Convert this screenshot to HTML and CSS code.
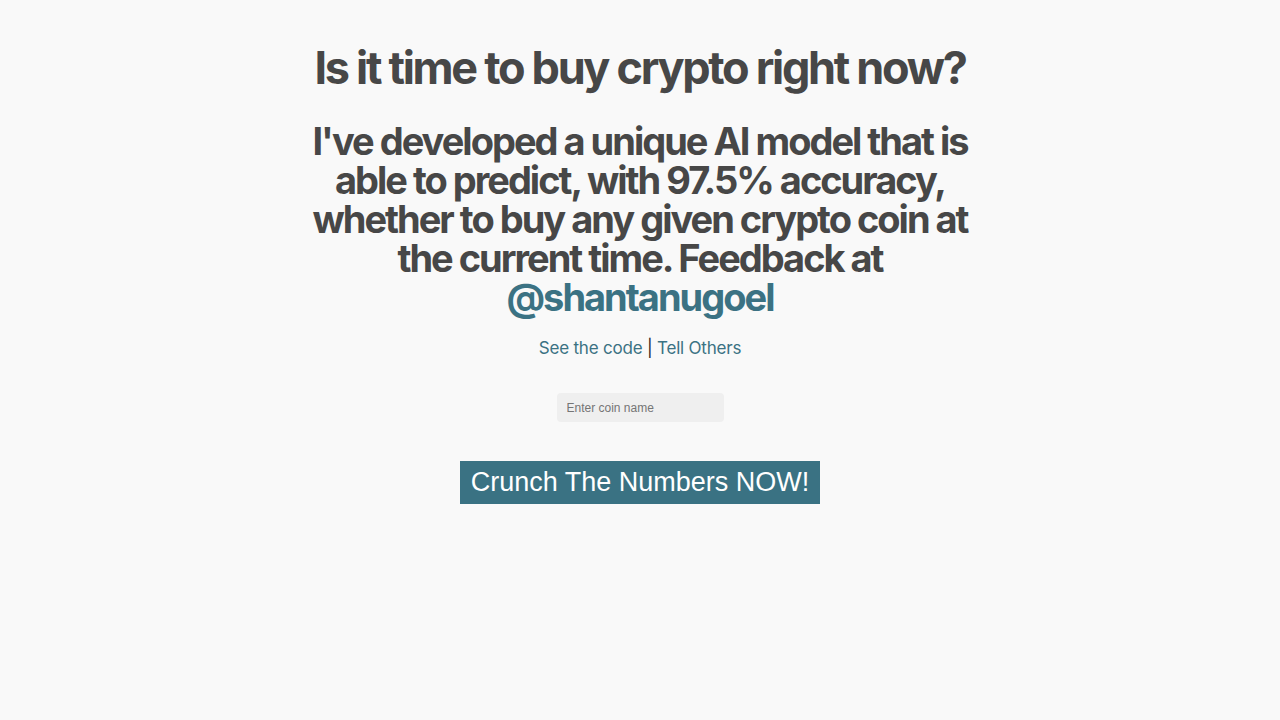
FILE: index.html
```html
<!DOCTYPE html>
<html>
<head>
<meta charset="utf-8">
<link rel="stylesheet" href="styles.css">
</head>
<body>
<main class="page">
  <h1 class="title">Is it time to buy crypto right now?</h1>
  <h2 class="lead">I've developed a unique AI model that is able to predict, with 97.5% accuracy, whether to buy any given crypto coin at the current time. Feedback at <a class="handle" href="#">@shantanugoel</a></h2>
  <p class="links"><a href="#">See the code</a> | <a href="#">Tell Others</a></p>
  <div class="field"><input class="coin" type="text" placeholder="Enter coin name"></div>
  <div class="action"><button class="crunch">Crunch The Numbers NOW!</button></div>
</main>
</body>
</html>
```
FILE: styles.css
```css
html, body {
  margin: 0;
  padding: 0;
  background: #f9f9f9;
}
body {
  font-family: Inter, "Noto Sans", sans-serif;
  color: #474747;
}
.page {
  max-width: 680px;
  margin: 0 auto;
  text-align: center;
  padding-top: 42px;
}
.title {
  margin: 0;
  font-size: 45px;
  line-height: 52px;
  font-weight: 700;
  letter-spacing: -2.3px;
}
.lead {
  margin: 28px auto 0;
  max-width: 670px;
  font-size: 38px;
  line-height: 39px;
  font-weight: 700;
  letter-spacing: -2px;
}
a {
  color: #3b7283;
  text-decoration: none;
}
.handle {
  display: inline-block;
}
.links {
  margin: 19px 0 0;
  font-size: 17px;
  line-height: 24px;
  color: #222;
  letter-spacing: -0.2px;
}
.field {
  margin-top: 33px;
}
.coin {
  width: 167px;
  height: 29px;
  box-sizing: border-box;
  border: none;
  border-radius: 4px;
  background: #efefef;
  padding: 0 10px;
  font-family: "Liberation Sans", Arial, sans-serif;
  font-size: 12px;
  color: #333;
}
.coin::placeholder {
  color: #757575;
}
.action {
  margin-top: 39px;
}
.crunch {
  border: none;
  background: #3a7283;
  color: #fff;
  font-family: "Liberation Sans", Arial, sans-serif;
  font-size: 27px;
  line-height: 31px;
  padding: 6px 11px;
}
```
